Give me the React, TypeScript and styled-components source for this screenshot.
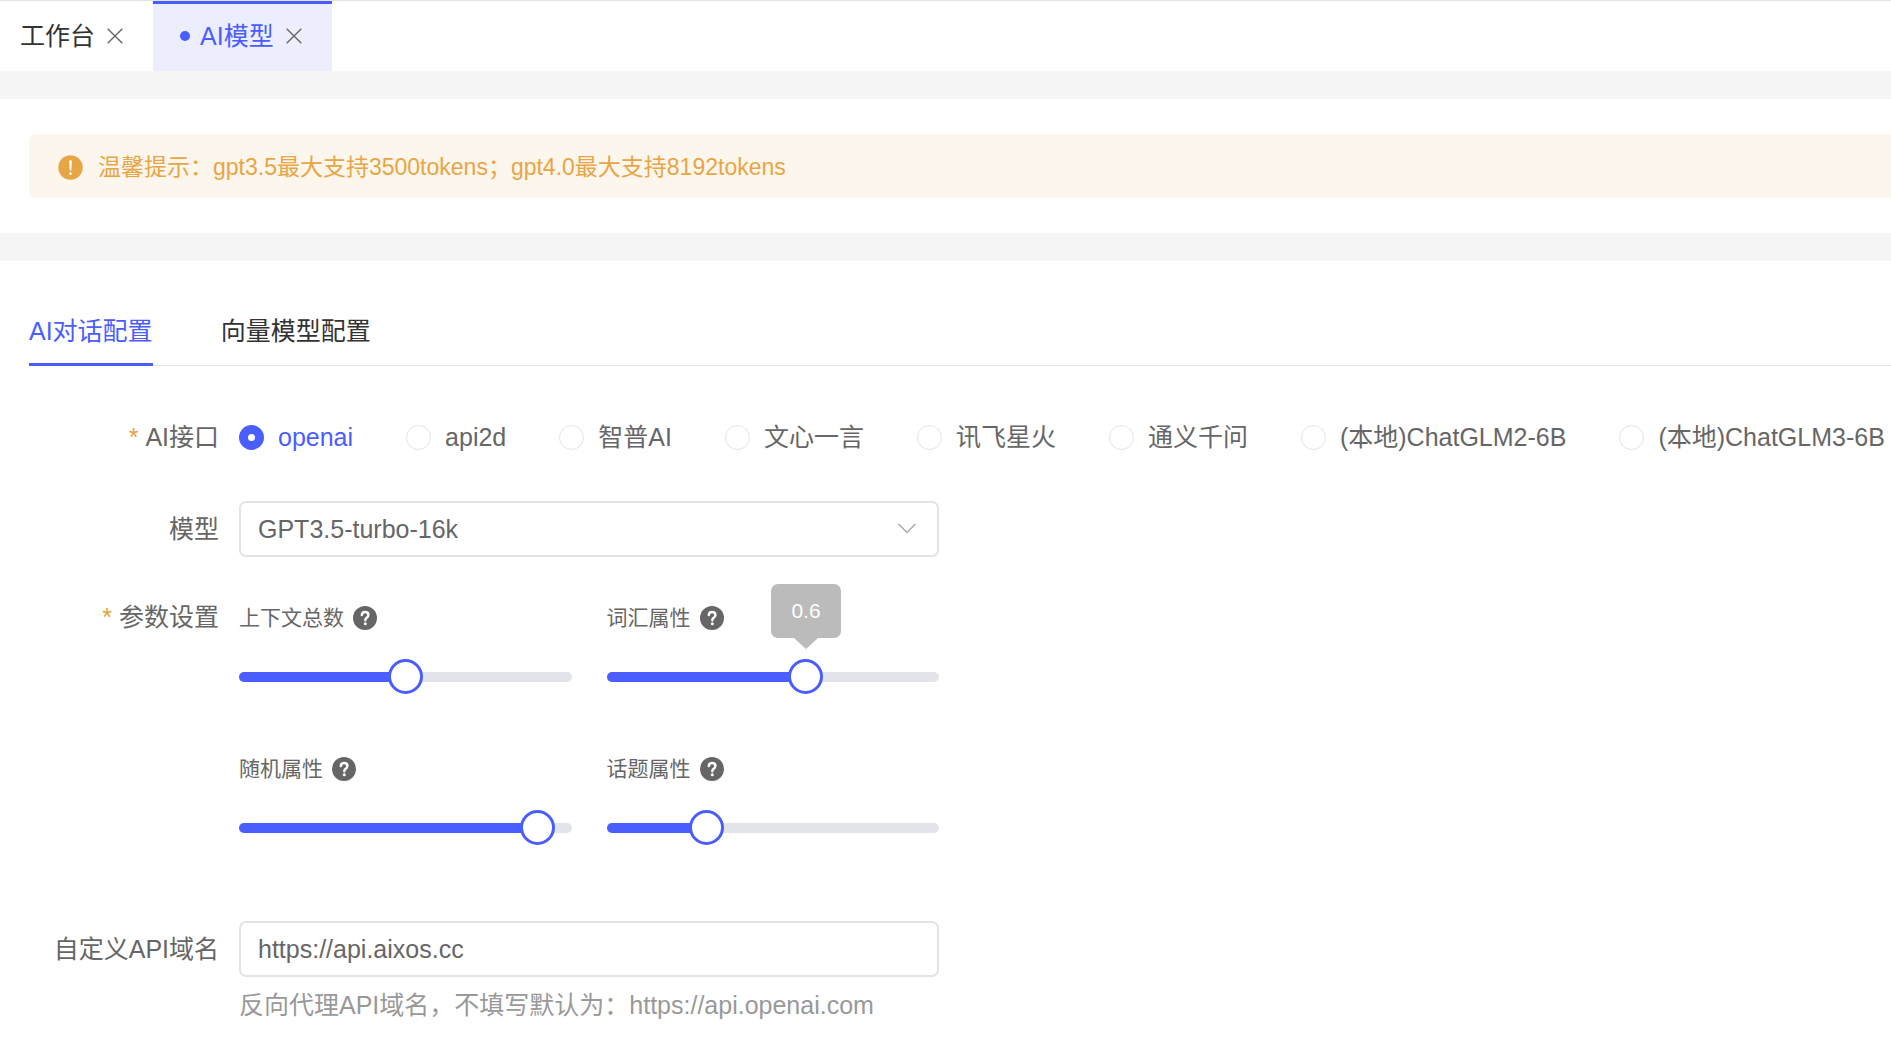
import { useState } from "react";
import styled, { createGlobalStyle, css } from "styled-components";

const color = {
  primary: "#4a5dff",
  primaryLight: "#eceefe",
  warning: "#e6a23c",
  warningText: "#e8a545",
  warningLight: "#fdf6ec",
  page: "#f5f5f5",
  border: "#e3e4ea",
  title: "#333333",
  text: "#666666",
  hint: "#999999",
};

const GlobalStyle = createGlobalStyle`
  *, *::before, *::after { box-sizing: border-box; }
  body {
    margin: 0;
    background: ${color.page};
    color: ${color.text};
    font: 25px/28px "Liberation Sans", "Noto Sans CJK SC", sans-serif;
    overflow: hidden;
  }
  button, input, select { font: inherit; color: inherit; margin: 0; }
`;

const Page = styled.div`
  display: flex;
  flex-direction: column;
  gap: 28px;
  min-height: 100vh;
`;

const TabBar = styled.nav`
  display: flex;
  height: 71px;
  background: #fff;
  border-top: 1px solid ${color.border};
`;

const PageTab = styled.div<{ $active?: boolean }>`
  display: flex;
  align-items: center;
  gap: 10px;
  padding: 0 28px 4px 20px;
  color: ${color.title};
  border-top: 3px solid transparent;
  ${(p) =>
    p.$active &&
    css`
      padding-left: 27px;
      color: ${color.primary};
      background: ${color.primaryLight};
      border-top-color: ${color.primary};
    `}
`;

const TabButton = styled.button`
  display: flex;
  align-items: center;
  gap: 10px;
  padding: 0;
  border: 0;
  background: none;
  white-space: nowrap;
`;

const Dot = styled.span`
  width: 10px;
  height: 10px;
  border-radius: 50%;
  background: currentColor;
`;

const CloseButton = styled.button`
  display: flex;
  padding: 2px;
  border: 0;
  background: none;
  color: ${color.text};
`;

const Card = styled.section<{ $fill?: boolean }>`
  padding: 35px 0 35px 29px;
  background: #fff;
  overflow: hidden;
  ${(p) => p.$fill && "flex: 1;"}
`;

const Alert = styled.div`
  display: flex;
  align-items: center;
  gap: 15px;
  height: 64px;
  padding: 2px 29px 0;
  border-radius: 7px 0 0 7px;
  background: ${color.warningLight};
  color: ${color.warningText};
  font-size: 23px;
  white-space: nowrap;
`;

const ConfigTabs = styled.div`
  display: flex;
  gap: 68px;
  height: 70px;
  border-bottom: 1px solid ${color.border};
`;

const ConfigTab = styled.button<{ $active: boolean }>`
  height: 70px;
  padding: 2px 0 0;
  border: 0;
  border-bottom: 3px solid ${(p) => (p.$active ? color.primary : "transparent")};
  background: none;
  color: ${(p) => (p.$active ? color.primary : color.title)};
  white-space: nowrap;
`;

const Form = styled.form`
  display: flex;
  flex-direction: column;
  gap: 32px;
  padding-top: 43px;
`;

const FormRow = styled.div`
  display: grid;
  grid-template-columns: 210px 1fr;
`;

const labelStyle = css`
  display: flex;
  justify-content: flex-end;
  align-items: center;
  gap: 7px;
  height: 56px;
  padding-right: 20px;
  white-space: nowrap;
`;

const Label = styled.label`
  ${labelStyle}
`;

const GroupLabel = styled.span`
  ${labelStyle}
`;

const Required = styled.span`
  color: ${color.warning};
`;

const RadioGroup = styled.div`
  display: flex;
  align-items: center;
  gap: 53px;
  height: 60px;
  padding-bottom: 4px;
`;

const RadioLabel = styled.label<{ $checked: boolean }>`
  display: flex;
  align-items: center;
  gap: 14px;
  white-space: nowrap;
  color: ${(p) => (p.$checked ? color.primary : color.text)};
`;

const Radio = styled.input`
  appearance: none;
  flex: none;
  width: 25px;
  height: 25px;
  border: 1px solid ${color.border};
  border-radius: 50%;
  background: #fff;
  &:checked {
    border: 9px solid ${color.primary};
  }
`;

const fieldStyle = css`
  width: 100%;
  height: 56px;
  padding: 0 17px;
  border: 2px solid ${color.border};
  border-radius: 7px;
  background: #fff;
  outline: none;
`;

const Field = styled.div`
  width: 100%;
  max-width: 700px;
`;

const SelectBox = styled.div`
  position: relative;
`;

const Select = styled.select`
  ${fieldStyle}
  appearance: none;
`;

const SelectArrow = styled.svg`
  position: absolute;
  right: 22px;
  top: 18px;
  pointer-events: none;
`;

const TextInput = styled.input`
  ${fieldStyle}
`;

const Hint = styled.p`
  margin: 14px 0 0;
  color: ${color.hint};
  white-space: nowrap;
`;

const Sliders = styled(Field)`
  display: grid;
  grid-template-columns: 1fr 1fr;
  gap: 49px 35px;
  padding: 15px 0 32px;
`;

const SliderItem = styled.div`
  display: flex;
  flex-direction: column;
  gap: 27px;
  padding-bottom: 12px;
`;

const SliderTitle = styled.div`
  display: flex;
  align-items: center;
  gap: 9px;
  height: 28px;
  font-size: 21px;
`;

const SliderBox = styled.div`
  position: relative;
  display: grid;
  align-items: center;
  height: 35px;
  & > * {
    grid-area: 1 / 1;
  }
`;

const Track = styled.div`
  height: 10px;
  border-radius: 5px;
  background: ${color.border};
`;

const Fill = styled.div`
  height: 100%;
  border-radius: 5px 0 0 5px;
  background: ${color.primary};
`;

const Range = styled.input`
  appearance: none;
  width: calc(100% + 34px);
  height: 35px;
  margin: 0 -17px;
  background: transparent;
  outline: none;
  &::-webkit-slider-thumb {
    appearance: none;
    width: 35px;
    height: 35px;
    border: 3px solid ${color.primary};
    border-radius: 50%;
    background: #fff;
  }
`;

const Tooltip = styled.output`
  position: absolute;
  bottom: 56px;
  width: 70px;
  height: 54px;
  margin-left: -35px;
  border-radius: 7px;
  background: #bbbbbb;
  color: #fff;
  font-size: 21px;
  line-height: 54px;
  text-align: center;
  &::after {
    content: "";
    position: absolute;
    top: 100%;
    left: 23px;
    border: 12px solid transparent;
    border-top: 11px solid #bbbbbb;
    border-bottom: 0;
  }
`;

function CloseIcon() {
  return (
    <svg width="16" height="16" viewBox="0 0 16 16" fill="none" stroke="currentColor" strokeWidth="1.4">
      <path d="M.7 .7 15.300 15.300M15.300 .7 .7 15.300" />
    </svg>
  );
}

function WarningIcon() {
  return (
    <svg width="25" height="25" viewBox="0 0 25 25">
      <circle cx="12.500" cy="12.500" r="12.2" fill={color.warningText} />
      <path d="M11.200 6.600a1.300 1.300 0 0 1 2.600 0l-.5 8.400a.8.8 0 0 1-1.600 0z" fill="#fff" />
      <circle cx="12.500" cy="18.600" r="1.300" fill="#fff" />
    </svg>
  );
}

function HelpIcon() {
  return (
    <svg width="24" height="24" viewBox="0 0 24 24" fill="none">
      <circle cx="12" cy="12" r="12" fill={color.text} />
      <path
        d="M8.8 9.1C8.9 7 10.200 6 12.100 6c2 0 3.300 1.100 3.300 2.900 0 1.300-.6 2-1.700 2.800-1 .8-1.400 1.300-1.400 2.500"
        stroke="#fff"
        strokeWidth="2.400"
        strokeLinecap="round"
      />
      <circle cx="12.300" cy="17.800" r="1.500" fill="#fff" />
    </svg>
  );
}

const providers = [
  "openai",
  "api2d",
  "智普AI",
  "文心一言",
  "讯飞星火",
  "通义千问",
  "(本地)ChatGLM2-6B",
  "(本地)ChatGLM3-6B",
];

const params = [
  { id: "context", title: "上下文总数", value: 5, max: 10, step: 1 },
  { id: "vocabulary", title: "词汇属性", value: 0.6, max: 1, step: 0.1, tooltip: true },
  { id: "random", title: "随机属性", value: 0.9, max: 1, step: 0.1 },
  { id: "topic", title: "话题属性", value: 0.3, max: 1, step: 0.1 },
];

function ParamSlider({ id, title, value: initial, max, step, tooltip }: (typeof params)[number]) {
  const [value, setValue] = useState(initial);
  const percent = `${(value / max) * 100}%`;
  return (
    <SliderItem>
      <SliderTitle>
        <label htmlFor={id}>{title}</label>
        <HelpIcon />
      </SliderTitle>
      <SliderBox>
        <Track>
          <Fill style={{ width: percent }} />
        </Track>
        <Range
          id={id}
          type="range"
          min={0}
          max={max}
          step={step}
          value={value}
          onChange={(e) => setValue(Number(e.target.value))}
        />
        {tooltip && (
          <Tooltip htmlFor={id} style={{ left: percent }}>
            {value}
          </Tooltip>
        )}
      </SliderBox>
    </SliderItem>
  );
}

export default function App() {
  const [tab, setTab] = useState(0);
  const [provider, setProvider] = useState(providers[0]);
  const [domain, setDomain] = useState("https://api.aixos.cc");

  return (
    <>
      <GlobalStyle />
      <Page>
        <TabBar>
          <PageTab>
            <TabButton type="button">工作台</TabButton>
            <CloseButton type="button">
              <CloseIcon />
            </CloseButton>
          </PageTab>
          <PageTab $active>
            <TabButton type="button">
              <Dot />
              AI模型
            </TabButton>
            <CloseButton type="button">
              <CloseIcon />
            </CloseButton>
          </PageTab>
        </TabBar>

        <Card>
          <Alert>
            <WarningIcon />
            <span>温馨提示：gpt3.5最大支持3500tokens；gpt4.0最大支持8192tokens</span>
          </Alert>
        </Card>

        <Card $fill>
          <ConfigTabs>
            {["AI对话配置", "向量模型配置"].map((name, i) => (
              <ConfigTab key={name} type="button" $active={tab === i} onClick={() => setTab(i)}>
                {name}
              </ConfigTab>
            ))}
          </ConfigTabs>

          <Form>
            <FormRow>
              <GroupLabel>
                <Required>*</Required>AI接口
              </GroupLabel>
              <RadioGroup role="radiogroup">
                {providers.map((name) => (
                  <RadioLabel key={name} $checked={provider === name}>
                    <Radio
                      type="radio"
                      name="provider"
                      checked={provider === name}
                      onChange={() => setProvider(name)}
                    />
                    {name}
                  </RadioLabel>
                ))}
              </RadioGroup>
            </FormRow>

            <FormRow>
              <Label htmlFor="model">模型</Label>
              <Field>
                <SelectBox>
                  <Select id="model">
                    <option>GPT3.5-turbo-16k</option>
                  </Select>
                  <SelectArrow width="20" height="20" viewBox="0 0 20 20" fill="none" stroke="#a8abb2" strokeWidth="1.5">
                    <path d="M1.500 5 10 13.500 18.500 5" />
                  </SelectArrow>
                </SelectBox>
              </Field>
            </FormRow>

            <FormRow>
              <GroupLabel>
                <Required>*</Required>参数设置
              </GroupLabel>
              <Sliders>
                {params.map((p) => (
                  <ParamSlider key={p.id} {...p} />
                ))}
              </Sliders>
            </FormRow>

            <FormRow>
              <Label htmlFor="domain">自定义API域名</Label>
              <Field>
                <TextInput id="domain" type="text" value={domain} onChange={(e) => setDomain(e.target.value)} />
                <Hint>反向代理API域名，不填写默认为：https://api.openai.com</Hint>
              </Field>
            </FormRow>
          </Form>
        </Card>
      </Page>
    </>
  );
}
